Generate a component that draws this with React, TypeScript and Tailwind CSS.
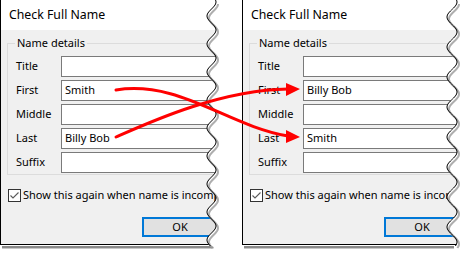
import React from "react";

function wave(xc: number, a: number, period: number, peakY: number, y0: number, y1: number, dx = 0, dy = 0) {
  const pts: string[] = [];
  for (let y = y0; y <= y1; y += 1) {
    const x = xc + a * Math.cos((2 * Math.PI * (y - peakY)) / period);
    pts.push(`${(x + dx).toFixed(2)},${(y + dy).toFixed(2)}`);
  }
  return pts;
}

function TornEdge({ xc, a, period, peakY }: { xc: number; a: number; period: number; peakY: number }) {
  const bottom = 246;
  const pts = wave(xc, a, period, peakY, 0, bottom);
  const fillPts = [...pts, `240,${bottom + 8}`, `240,0`].join(" ");
  const shadowPts = wave(xc, a, period, peakY, 2, bottom, 2, 2).join(" ");
  return (
    <svg className="absolute left-0 top-0 pointer-events-none" width="240" height="253" viewBox="0 0 240 253">
      <rect x="2" y={bottom} width={xc} height="2" fill="#8a8a8a" />
      <rect x="2" y={bottom + 2} width={xc} height="1" fill="#c8c8c8" />
      <polygon points={fillPts} fill="#ffffff" />
      <polyline points={shadowPts} fill="none" stroke="#9a9a9a" strokeWidth="2" strokeOpacity="0.8" />
      <polyline points={pts.join(" ")} fill="none" stroke="#000000" strokeWidth="1" />
    </svg>
  );
}

function Row({ label, value }: { label: string; value?: string }) {
  return (
    <div className="flex items-center h-[21px]">
      <div className="w-[53px] pl-[8px] text-black">{label}</div>
      <div className="flex-1 h-[21px] border border-[#7a7a7a] bg-white pl-[3px] flex items-center text-black whitespace-nowrap">
        {value}
      </div>
    </div>
  );
}

function Dialog({ first, last, className, edge }: { first: string; last: string; className?: string; edge: { xc: number; a: number; period: number; peakY: number } }) {
  return (
    <div className={`relative w-[230px] h-[253px] shrink-0 overflow-hidden ${className ?? ""}`}>
      <div className="w-[230px] border-l border-b border-black bg-[#f0f0f0]">
        <div className="h-[30px] bg-white flex items-center pl-[8px] text-black text-[12.3px]">Check Full Name</div>
        <div className="pl-[6px] pt-[5px] pb-[7px]">
          <fieldset className="border border-[#dcdcdc] m-0 p-0">
            <legend className="ml-[7px] px-[2px] leading-[16px] text-black">Name details</legend>
            <div className="flex flex-col gap-[3px] pt-[5px] pb-[1px]">
              <Row label="Title" />
              <Row label="First" value={first} />
              <Row label="Middle" />
              <Row label="Last" value={last} />
              <Row label="Suffix" />
            </div>
          </fieldset>
          <div className="mt-[12px] h-[16px] flex items-center whitespace-nowrap w-[210px] overflow-hidden">
            <div className="ml-[1px] w-[13px] h-[13px] border border-[#333333] bg-white flex items-center justify-center shrink-0">
              <svg width="11" height="11" viewBox="0 0 11 11">
                <path d="M1.5 5.5 L4 8 L9.5 2.5" fill="none" stroke="#5a5a5a" strokeWidth="1.1" />
              </svg>
            </div>
            <span className="ml-[2px] text-black leading-[16px] min-w-0 flex-1 overflow-hidden">Show this again when name is incomplete or unclear</span>
          </div>
          <div className="mt-[14px] ml-[135px] w-[76px] h-[20px] border-2 border-[#0078d7] bg-[#e1e1e1] flex items-center justify-center text-black">
            OK
          </div>
        </div>
      </div>
      <TornEdge {...edge} />
    </div>
  );
}

export default function App() {
  return (
    <div className="relative w-[466px] h-[253px] bg-white overflow-hidden flex items-start text-[11px] font-['Noto_Sans',sans-serif]">
      <Dialog first="Smith" last="Billy Bob" edge={{ xc: 211.5, a: 4.5, period: 28, peakY: 2 }} />
      <Dialog first="Billy Bob" last="Smith" className="ml-[12px]" edge={{ xc: 210, a: 5, period: 30, peakY: 2 }} />
      <svg className="absolute left-0 top-0 pointer-events-none" width="466" height="253" viewBox="0 0 466 253">
        <path d="M116 90 C180 80, 228 126, 288 136" fill="none" stroke="#ff0000" strokeWidth="3" strokeLinecap="round" />
        <polygon points="286,130 300,137 286,143" fill="#ff0000" />
        <path d="M116 137 C150 122, 220 90, 288 89" fill="none" stroke="#ff0000" strokeWidth="3" strokeLinecap="round" />
        <polygon points="286,83 300,89 286,96" fill="#ff0000" />
      </svg>
    </div>
  );
}
